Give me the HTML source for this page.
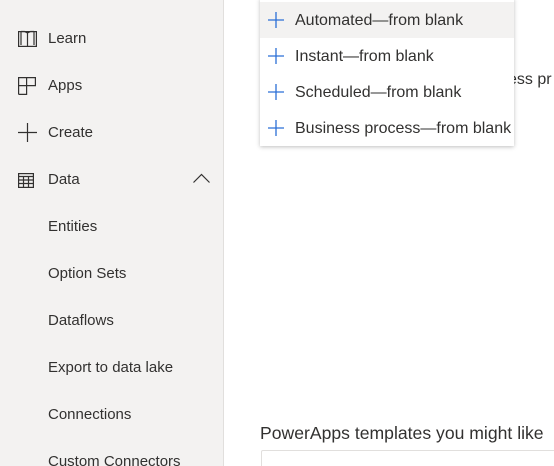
<!DOCTYPE html>
<html><head><meta charset="utf-8"><style>
html,body{margin:0;width:554px;height:466px;overflow:hidden}
body{background:#fff;font-family:"Liberation Sans",sans-serif;color:#323130;position:relative}
.side{position:absolute;left:0;top:0;width:223px;height:466px;background:#f3f2f1;border-right:1px solid #e1dfdd}
.it{position:absolute;left:48px;font-size:15px;line-height:20px}
.ic{position:absolute;left:18px}
.dd{position:absolute;left:260px;top:-2px;width:254px;height:148px;background:#fff;box-shadow:0 1px 4px rgba(0,0,0,.25)}
.di{position:absolute;left:0;width:254px;height:36px;font-size:16px;line-height:38px}
.di span{position:absolute;left:35px}
.di svg{position:absolute;left:8px;top:10px}
</style></head><body>
<div class="side">
<svg class="ic" style="top:30px" width="19" height="17" viewBox="0 0 19 17" fill="none" stroke="#323130" stroke-width="1.2"><rect x="0.6" y="1.6" width="17.8" height="14.8"/><path d="M3 1v14M9.5 2v14M16 1v14M3 1.5h3.5l3 1.5 3-1.5H16"/></svg>
<div class="it" style="top:29px">Learn</div>
<svg class="ic" style="top:77px" width="18" height="18" viewBox="0 0 18 18" fill="none" stroke="#323130" stroke-width="1.2"><path d="M0.6 17.4V0.6H17.4V8.6H8.6V17.4H0.6M0.6 8.6H8.6M8.6 0.6V8.6"/></svg>
<div class="it" style="top:76px">Apps</div>
<svg class="ic" style="top:123px" width="19" height="19" viewBox="0 0 19 19" stroke="#323130" stroke-width="1.2"><path d="M9.5 0v19M0 9.5h19"/></svg>
<div class="it" style="top:123px">Create</div>
<svg class="ic" style="top:173px" width="16" height="15" viewBox="0 0 16 15" fill="none" stroke="#323130" stroke-width="1.2"><rect x="0.6" y="0.6" width="14.8" height="13.8"/><path d="M0.6 3.5h14.8M0.6 7h14.8M0.6 10.5h14.8M5.5 3.5v11M10.5 3.5v11"/></svg>
<div class="it" style="top:170px">Data</div>
<svg style="position:absolute;left:193px;top:173px" width="17" height="10" viewBox="0 0 17 10" fill="none" stroke="#323130" stroke-width="1.2"><path d="M0.5 9.5 8.5 1.5l8 8"/></svg>
<div class="it" style="top:217px">Entities</div>
<div class="it" style="top:264px">Option Sets</div>
<div class="it" style="top:311px">Dataflows</div>
<div class="it" style="top:358px">Export to data lake</div>
<div class="it" style="top:405px">Connections</div>
<div class="it" style="top:452px">Custom Connectors</div>
</div>
<div style="position:absolute;left:508px;top:71px;font-size:16px">ess pr</div>
<div class="dd">
<div class="di" style="top:4px;background:#f3f2f1"><svg width="16" height="16" stroke="#2b6fd6" stroke-width="1.3"><path d="M8 0v16M0 8h16"/></svg><span>Automated—from blank</span></div>
<div class="di" style="top:40px"><svg width="16" height="16" stroke="#2b6fd6" stroke-width="1.3"><path d="M8 0v16M0 8h16"/></svg><span>Instant—from blank</span></div>
<div class="di" style="top:76px"><svg width="16" height="16" stroke="#2b6fd6" stroke-width="1.3"><path d="M8 0v16M0 8h16"/></svg><span>Scheduled—from blank</span></div>
<div class="di" style="top:112px"><svg width="16" height="16" stroke="#2b6fd6" stroke-width="1.3"><path d="M8 0v16M0 8h16"/></svg><span>Business process—from blank</span></div>
</div>
<div style="position:absolute;left:260px;top:423px;font-size:17.6px;white-space:nowrap">PowerApps templates you might like</div>
<div style="position:absolute;left:261px;top:450px;width:300px;height:30px;border:1px solid #e1dfdd;border-radius:2px"></div>
</body></html>
